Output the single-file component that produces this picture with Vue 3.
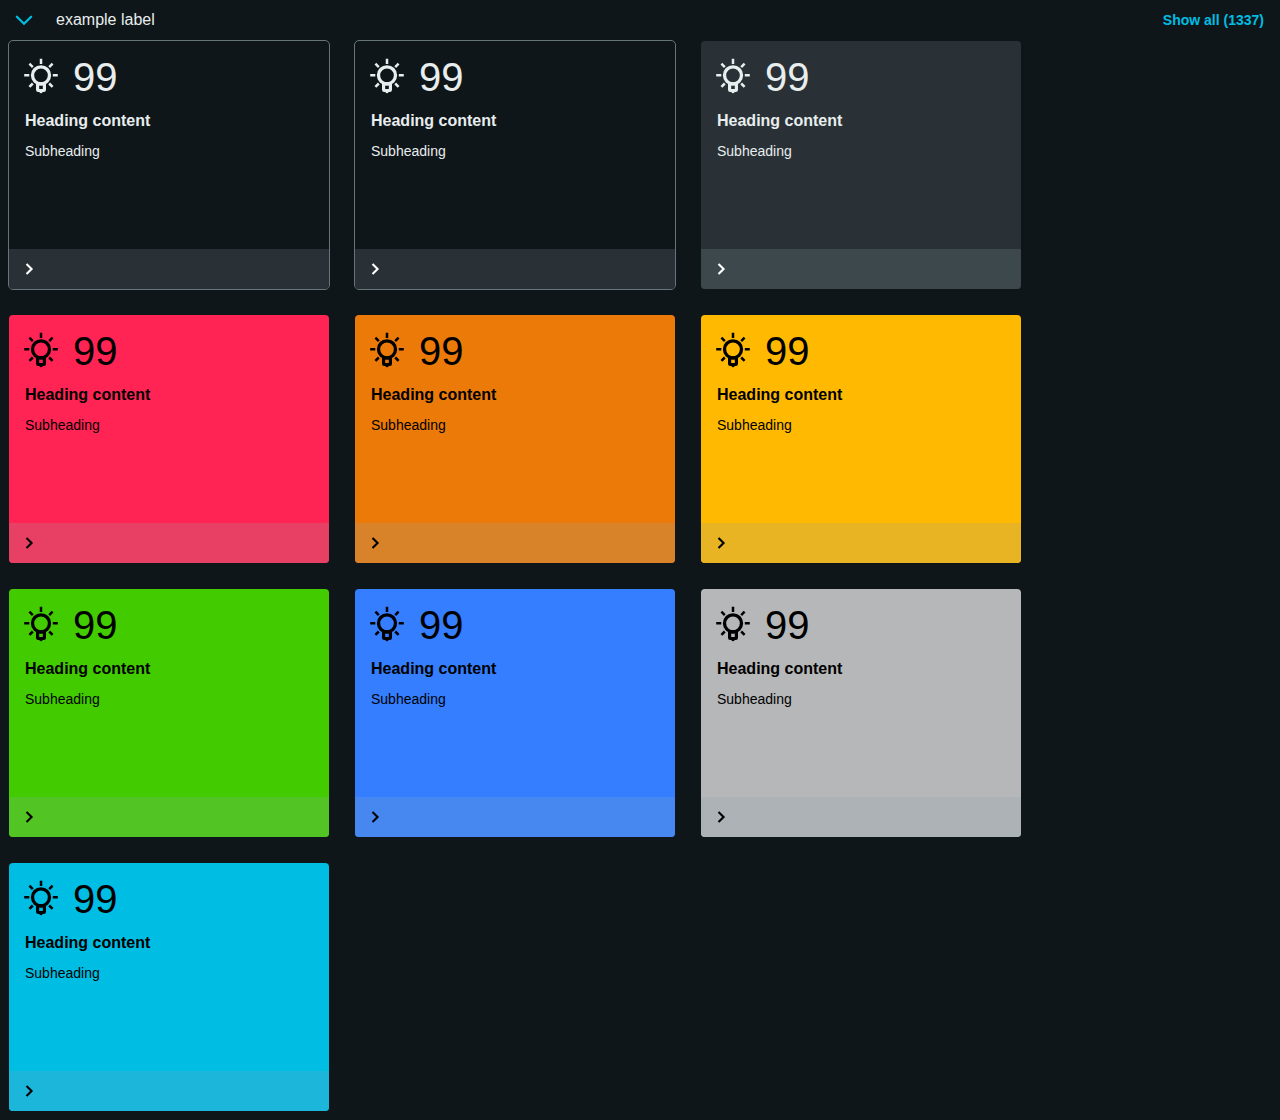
<script setup>
const tiles = ['outline', 'outline', 'filled', 'alarm', 'orange', 'warning', 'success', 'info', 'neutral', 'primary']
</script>

<template>
  <main class="page">
    <header class="bar">
      <svg class="collapse" width="24" height="24" viewBox="0 0 24 24"><path d="M4.9 8.8 12 15.7l7.1-6.9" /></svg>
      <span class="label">example label</span>
      <a class="all">Show all (1337)</a>
    </header>
    <section class="tiles">
      <article v-for="(tone, i) in tiles" :key="i" class="tile" :class="tone">
        <div class="body">
          <div class="top">
            <svg class="bulb" width="40" height="40" viewBox="0 0 40 40">
              <g fill="none" stroke="currentColor" stroke-width="2.5">
                <circle cx="20" cy="20.3" r="8.5" stroke-width="3.3" />
                <path d="M20 3.8V9M3.2 20.2h5.1M31.8 20.2h5M8.4 8.7l3.4 3.4M31.6 8.7l-3.4 3.4M8.4 31.9l3.4-3.4M31.6 31.9l-3.4-3.4" />
              </g>
              <path fill="currentColor" fill-rule="evenodd" d="M15 27.2h10v7.6q0 2.2-2.2 2.2h-1q-1.8 2.5-3.6 0h-1q-2.2 0-2.2-2.2zM18.2 30.4v3.5h3.6v-3.5z" />
            </svg>
            <span class="count">99</span>
          </div>
          <div class="heading">Heading content</div>
          <div class="sub">Subheading</div>
        </div>
        <footer><svg width="24" height="24" viewBox="0 0 24 24"><path d="m9.5 6.9 5.1 5.1-5.1 5.1" /></svg></footer>
      </article>
    </section>
  </main>
</template>

<style>
body { background: #0f1619; }
</style>
<style scoped>
.page { height: 1120px; overflow: hidden; background: #0f1619; color: #e8edee; font-family: "Liberation Sans", Arial, sans-serif; }
.bar { height: 40px; padding: 0 16px 0 12px; display: flex; align-items: center; }
.collapse { fill: none; stroke: #00bde3; stroke-width: 2.3; stroke-linecap: round; }
.label { margin-left: 20px; font-size: 16px; }
.all { margin-left: auto; color: #00bde3; font-size: 14px; font-weight: 700; }
.tiles { display: grid; grid-template-columns: repeat(3, 322px); grid-auto-rows: 250px; gap: 24px; padding-left: 8px; }
.tile { box-sizing: border-box; border: 1px solid transparent; border-radius: 5px; background-clip: padding-box; display: flex; flex-direction: column; overflow: hidden; color: #000; }
.body { flex: 1; padding: 14px 16px 0; }
.top { display: flex; height: 44px; }
.bulb { margin-left: -4px; }
.count { margin-left: 12px; font-size: 40px; line-height: 44px; }
.heading { margin-top: 12px; font-size: 16px; line-height: 20px; font-weight: 700; }
.sub { margin-top: 12px; font-size: 14px; line-height: 16px; }
footer { height: 40px; padding-left: 8px; display: flex; align-items: center; }
footer svg { fill: none; stroke: currentColor; stroke-width: 2.1; }
.outline, .filled { color: #e8edee; }
.outline footer, .filled footer { color: #fff; }
.outline { border-color: #66757a; }
.outline footer { background: #293136; }
.filled { background-color: #293136; }
.filled footer { background: #3d484d; }
.alarm { background-color: #ff2453; }
.alarm footer { background: #e84065; }
.orange { background-color: #ec7a08; }
.orange footer { background: #d8832a; }
.warning { background-color: #ffb900; }
.warning footer { background: #e8b423; }
.success { background-color: #42cc00; }
.success footer { background: #52c424; }
.info { background-color: #347eff; }
.info footer { background: #4687f0; }
.neutral { background-color: #b6b7b9; }
.neutral footer { background: #acb2b5; }
.primary { background-color: #00bde3; }
.primary footer { background: #1cb6da; }
</style>
